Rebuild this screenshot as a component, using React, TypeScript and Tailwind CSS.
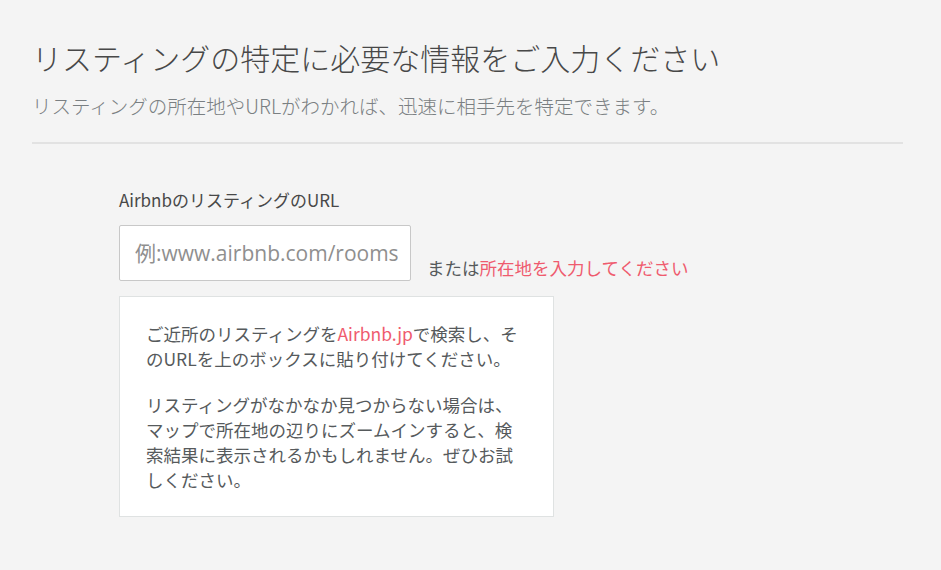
export default function App() {
  return (
    <div className="min-h-screen bg-[#f4f4f4] font-['Noto_Sans_CJK_JP',sans-serif] text-[#484848]">
      <div className="w-[871px] ml-8 pt-[39px]">
        {/* Header */}
        <h1 className="text-[30px] leading-[36px] font-light text-[#484848]">
          リスティングの特定に必要な情報をご入力ください
        </h1>
        <p className="mt-[17px] text-[19.5px] leading-[28px] font-light text-[#7a7f82]">
          リスティングの所在地やURLがわかれば、迅速に相手先を特定できます。
        </p>
        <div className="mt-[22px] h-[2px] bg-[#e2e2e2]" />

        {/* Form */}
        <div className="ml-[87px] pt-[44px]">
          <label className="block text-[17px] leading-[24px] text-[#484848]">
            AirbnbのリスティングのURL
          </label>
          <div className="mt-[13px] flex items-end gap-[16px]">
            <input
              type="text"
              placeholder="例:www.airbnb.com/rooms/..."
              style={{ fontFamily: '"Open Sans", "Noto Sans CJK JP", sans-serif' }}
              className="w-[292px] h-[56px] rounded-[2px] border border-[#c8c8c8] bg-white pl-[15px] pr-[12px] text-[21px] text-[#484848] placeholder:text-[#8f8f8f] outline-none"
            />
            <p className="pb-[1px] text-[17.5px] leading-[24px] text-[#565a5c]">
              または<a href="#" className="text-[#ef5b6e]">所在地を入力してください</a>
            </p>
          </div>

          <div className="mt-[15px] w-[435px] border border-[#dfe2e2] bg-white px-[26px] py-[24px] text-[17.5px] leading-[25px] text-[#565a5c]">
            <p>
              ご近所のリスティングを<a href="#" className="text-[#ef5b6e]">Airbnb.jp</a>で検索し、そのURLを上のボックスに貼り付けてください。
            </p>
            <p className="mt-[21px]">
              リスティングがなかなか見つからない場合は、マップで所在地の辺りにズームインすると、検索結果に表示されるかもしれません。ぜひお試しください。
            </p>
          </div>
        </div>
      </div>
    </div>
  );
}
